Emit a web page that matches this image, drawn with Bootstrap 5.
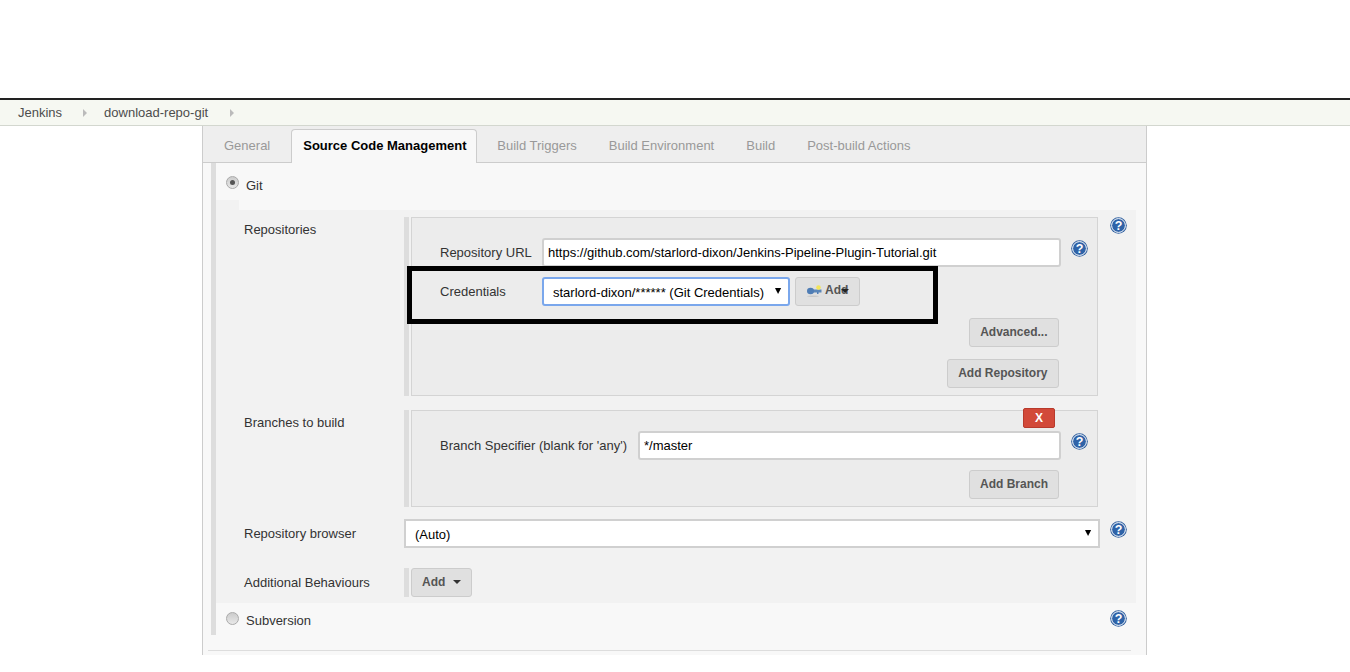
<!DOCTYPE html>
<html lang="en">
<head>
<meta charset="utf-8">
<title>Jenkins</title>
<link href="https://cdn.jsdelivr.net/npm/bootstrap@5.3.0/dist/css/bootstrap.min.css" rel="stylesheet">
<style>
html,body{background:#fff;}
body{font-family:"Liberation Sans",Arial,sans-serif;font-size:13px;line-height:18px;color:#333;height:672px;overflow:hidden;position:relative;}
.top-gap{height:98px;}
.crumbs{height:28px;border-top:2px solid #222;border-bottom:1px solid #d3d7cf;background:#f6f8f2;padding-left:18px;color:#4d4d4d;}
.crumb-text{line-height:25px;}
.crumb-arrow{width:0;height:0;border-left:4px solid #bbb;border-top:4px solid transparent;border-bottom:4px solid transparent;margin:1px 17px 0 21px;}
.crumb-text + .crumb-arrow:last-child{margin-left:22px;}
.config-panel{width:945px;margin-left:202px;height:529px;background:#f8f8f8;border-left:1px solid #ccc;border-right:1px solid #ccc;}
.tab-strip{height:37px;background:#eee;border-bottom:1px solid #ccc;padding:3px 0 0 5px;--bs-nav-tabs-border-width:0;flex-wrap:nowrap;}
.tab-strip .nav-link{border:0;background:none;color:#999;font-size:13px;line-height:18px;padding:8px 16px 0;height:33px;margin:0;border-radius:0;white-space:nowrap;}
.tab-strip .nav-link.active{background:#f8f8f8;color:#000;font-weight:700;border:1px solid #ccc;border-bottom:0;border-radius:4px 4px 0 0;padding:7px 0 0 11px;height:34px;margin:0 4px -1px 5px;width:186px;position:relative;z-index:1;}
.scm-wrap{margin-left:8px;border-left:5px solid #ddd;height:472px;position:relative;}
.scm-row{height:47px;padding:12px 0 0 10px;}
.scm-row.last{height:32px;padding:8px 10px 0 10px;}
.radio-dot{width:13px;height:13px;border-radius:50%;background:linear-gradient(#ccc,#e8e8e8);border:1px solid #aaa;flex:none;display:flex;align-items:center;justify-content:center;margin-top:1px;}
.radio-dot i{width:5px;height:5px;border-radius:50%;background:#555;display:block;}
.radio-label{margin-left:7px;margin-top:2px;}
.scm-row.last .radio-label{margin-top:1px;}
.git-block{width:920px;height:393px;background:#f2f2f2;position:relative;padding:7px 0 0 28px;}
.notch{position:absolute;left:0;top:-10px;width:23px;height:10px;background:#f2f2f2;}
.field-row{display:flex;}
.row-repos{height:179px;}
.row-branches{height:97px;margin-top:14px;}
.row-browser{height:29px;margin-top:12px;}
.row-extra{height:29px;margin-top:20px;}
.left-label{width:160px;flex:none;padding-top:6px;}
.left-label.high{padding-top:4px;}
.sub-block{width:689px;flex:none;display:flex;}
.side-bar{width:5px;flex:none;background:#ddd;margin-right:2px;}
.inset{width:687px;background:#ececec;border:1px solid #d4d4d4;position:relative;padding:20px 0 0 28px;flex:none;}
.form-line{display:flex;align-items:flex-start;height:29px;}
.form-line.url-line{margin-bottom:10px;}
.label-url{width:102px;padding-top:6px;flex:none;}
.label-cred{width:102px;padding-top:6px;flex:none;}
.label-branch{width:198px;padding-top:6px;flex:none;white-space:nowrap;}
.text-box.form-control{height:29px;border:2px solid #d0d0d0;border-radius:3px;padding:0 4px;font-size:13px;line-height:25px;color:#000;background:#fff;box-shadow:none;flex:none;}
.text-box.w-url{width:519px;}
.text-box.w-branch{width:423px;}
.pick-box.form-select{height:29px;border:2px solid #d0d0d0;border-radius:0;padding:2px 20px 0 9px;font-size:13px;color:#000;background-color:#fff;background-image:url("data:image/svg+xml,%3Csvg xmlns='http://www.w3.org/2000/svg' width='8' height='6'%3E%3Cpath d='M0 0h7L3.500 6z' fill='%23000'/%3E%3C/svg%3E");background-position:right 6px top 9px;background-size:7px 6px;flex:none;}
.pick-box.focused{border-color:#7aa7ec;border-radius:3px;width:248px;}
.pick-box.wide{width:696px;}
.gray-btn.btn{background:#e0e0e0;border:1px solid #ccc;border-radius:3px;color:#555;font-size:12px;font-weight:700;line-height:18px;height:29px;padding:3px 10.500px 5px;--bs-btn-hover-bg:#e0e0e0;}
.gray-btn.btn.snug{padding:3px 10px 5px;}
.btn-line{display:flex;justify-content:flex-end;width:647px;margin-left:-28px;margin-top:12px;}
.btn-line.tight{margin-top:10px;}
.help-mark{width:17px;height:17px;display:block;flex:none;}
.help-field{margin:2px 0 0 10px;}
.help-side{margin-left:17px;}
.help-browser{margin:2px 0 0 10px;}
.help-last{margin:-1px 9px 0 auto;}
.remove-x{position:absolute;right:42px;top:-3px;width:32px;height:20px;background:#d24939;border:1px solid #b83a2c;border-radius:2px;color:#fff;font-weight:700;font-size:12px;line-height:18px;text-align:center;}
.gray-btn.dropdown-toggle::after{border-top-color:#333;vertical-align:2px;margin-left:8px;border-width:4px 4px 0;}
.gray-btn.key-btn{width:65px;margin-left:5px;padding:3px 0 0 11px;display:flex;align-items:flex-start;flex:none;}
.gray-btn.key-btn::after{margin-left:-7px;margin-top:8px;border-top-color:#222;}
.key-art{margin:3px 3px 0 0;}
.bottom-rule{border-top:1px solid #ddd;margin:15px 15px 0 5px;}
.highlight-box{position:absolute;left:407px;top:266px;width:531px;height:58px;border:5px solid #000;pointer-events:none;z-index:5;}
</style>
</head>
<body>
<div class="top-gap"></div>
<div class="crumbs d-flex align-items-center">
  <span class="crumb-text">Jenkins</span>
  <span class="crumb-arrow"></span>
  <span class="crumb-text">download-repo-git</span>
  <span class="crumb-arrow"></span>
</div>
<div class="config-panel">
  <ul class="nav nav-tabs tab-strip">
    <li class="nav-item"><a class="nav-link" href="#">General</a></li>
    <li class="nav-item"><a class="nav-link active" href="#">Source Code Management</a></li>
    <li class="nav-item"><a class="nav-link" href="#">Build Triggers</a></li>
    <li class="nav-item"><a class="nav-link" href="#">Build Environment</a></li>
    <li class="nav-item"><a class="nav-link" href="#">Build</a></li>
    <li class="nav-item"><a class="nav-link" href="#">Post-build Actions</a></li>
  </ul>
  <div class="scm-wrap">
    <div class="scm-row d-flex"><span class="radio-dot"><i></i></span><span class="radio-label">Git</span></div>
    <div class="git-block">
      <span class="notch"></span>
      <div class="field-row row-repos">
        <div class="left-label high">Repositories</div>
        <div class="sub-block">
          <div class="side-bar"></div>
          <div class="inset">
            <div class="form-line url-line">
              <label class="label-url">Repository URL</label>
              <input class="form-control text-box w-url" value="https://github.com/starlord-dixon/Jenkins-Pipeline-Plugin-Tutorial.git">
              <svg class="help-mark help-field" viewBox="0 0 17 17"><use href="#help"/></svg>
            </div>
            <div class="form-line">
              <label class="label-cred">Credentials</label>
              <select class="form-select pick-box focused"><option>starlord-dixon/****** (Git Credentials)</option></select>
              <button class="btn gray-btn key-btn dropdown-toggle" type="button"><svg class="key-art" width="15" height="13" viewBox="0 0 15 13"><ellipse cx="6" cy="12.200" rx="6" ry=".8" fill="#c8c8c8"/><rect x="4" y="5.500" width="10.500" height="3" fill="#5b86b8"/><rect x="10" y="8" width="1.500" height="2" fill="#4f7db5"/><ellipse cx="3.500" cy="7" rx="3.500" ry="3.200" fill="#4f7db5"/><circle cx="11.500" cy="3.500" r="2.300" fill="#f3e55a"/></svg>Add</button>
            </div>
            <div class="btn-line"><button class="btn gray-btn" type="button">Advanced...</button></div>
            <div class="btn-line"><button class="btn gray-btn" type="button">Add Repository</button></div>
          </div>
        </div>
        <svg class="help-mark help-side" viewBox="0 0 17 17"><use href="#help"/></svg>
      </div>
      <div class="field-row row-branches">
        <div class="left-label high">Branches to build</div>
        <div class="sub-block">
          <div class="side-bar"></div>
          <div class="inset">
            <span class="remove-x">X</span>
            <div class="form-line url-line">
              <label class="label-branch">Branch Specifier (blank for 'any')</label>
              <input class="form-control text-box w-branch" value="*/master">
              <svg class="help-mark help-field" viewBox="0 0 17 17"><use href="#help"/></svg>
            </div>
            <div class="btn-line tight"><button class="btn gray-btn snug" type="button">Add Branch</button></div>
          </div>
        </div>
      </div>
      <div class="field-row row-browser">
        <div class="left-label">Repository browser</div>
        <select class="form-select pick-box wide"><option>(Auto)</option></select>
        <svg class="help-mark help-browser" viewBox="0 0 17 17"><use href="#help"/></svg>
      </div>
      <div class="field-row row-extra">
        <div class="left-label">Additional Behaviours</div>
        <div class="side-bar"></div>
        <button class="btn gray-btn snug dropdown-toggle" type="button">Add</button>
      </div>
    </div>
    <div class="scm-row last d-flex">
      <span class="radio-dot"></span><span class="radio-label">Subversion</span>
      <svg class="help-mark help-last" viewBox="0 0 17 17"><use href="#help"/></svg>
    </div>
  </div>
  <div class="bottom-rule"></div>
</div>
<div class="highlight-box"></div>
<svg width="0" height="0" class="position-absolute"><defs>
  <g id="help"><circle cx="8.500" cy="8.500" r="8.300" fill="#2f5f9f"/><circle cx="8.500" cy="8.500" r="6.900" fill="#2f63a8" stroke="#fff" stroke-width="1"/><text x="8.500" y="13" text-anchor="middle" font-family="Liberation Sans" font-weight="700" font-size="12.500" fill="#fff">?</text></g>
</defs></svg>
</body>
</html>
